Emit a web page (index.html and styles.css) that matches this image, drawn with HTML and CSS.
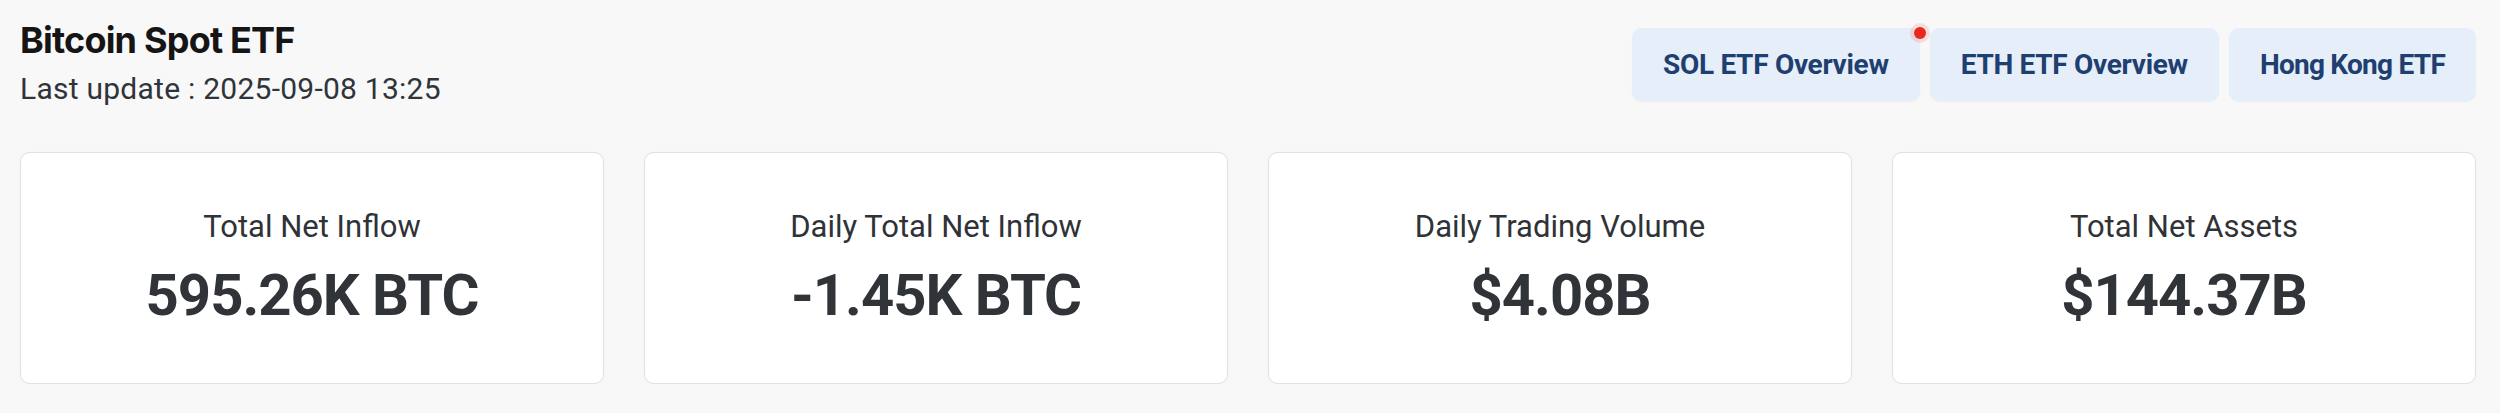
FILE: index.html
```html
<!DOCTYPE html>
<html lang="en">
<head>
<meta charset="utf-8">
<title>Bitcoin Spot ETF</title>
<link rel="stylesheet" href="styles.css">
</head>
<body>
<div class="page">
  <header class="header">
    <div class="heading">
      <h1 class="title">Bitcoin Spot ETF</h1>
      <div class="updated">Last update : 2025-09-08 13:25</div>
    </div>
    <nav class="links">
      <a class="link-btn has-dot" href="#">SOL ETF Overview<span class="dot"></span></a>
      <a class="link-btn" href="#">ETH ETF Overview</a>
      <a class="link-btn link-btn--tight" href="#">Hong Kong ETF</a>
    </nav>
  </header>
  <section class="cards">
    <div class="card">
      <div class="card-label">Total Net Inflow</div>
      <div class="card-value">595.26K BTC</div>
    </div>
    <div class="card">
      <div class="card-label">Daily Total Net Inflow</div>
      <div class="card-value">-1.45K BTC</div>
    </div>
    <div class="card">
      <div class="card-label">Daily Trading Volume</div>
      <div class="card-value">$4.08B</div>
    </div>
    <div class="card">
      <div class="card-label">Total Net Assets</div>
      <div class="card-value">$144.37B</div>
    </div>
  </section>
</div>
</body>
</html>
```

FILE: styles.css
```css
html, body {
  margin: 0;
  padding: 0;
  background: #f8f8f8;
}

body {
  font-family: Roboto, "Liberation Sans", sans-serif;
  color: #2f3237;
}

.page {
  padding: 18px 24px 0 20px;
}

.header {
  display: flex;
  justify-content: space-between;
  align-items: flex-start;
}

.title {
  margin: 0;
  font-family: Inter, Roboto, sans-serif;
  font-size: 36px;
  line-height: 44px;
  font-weight: 700;
  letter-spacing: -0.8px;
  color: #151515;
}

.updated {
  margin-top: 9px;
  font-size: 30px;
  line-height: 36px;
  letter-spacing: 0.25px;
  color: #30343a;
}

.links {
  display: flex;
  gap: 10px;
  margin-top: 10px;
}

.link-btn {
  position: relative;
  display: flex;
  align-items: center;
  justify-content: center;
  height: 73px;
  padding: 0 31px;
  box-sizing: border-box;
  border-radius: 10px;
  background: #e5eef9;
  box-shadow: 0 1px 2px rgba(30, 60, 110, 0.06);
  color: #1e3f6f;
  font-size: 28px;
  font-weight: 700;
  letter-spacing: -0.3px;
  text-decoration: none;
  white-space: nowrap;
}

.link-btn--tight {
  letter-spacing: -0.75px;
}

.dot {
  position: absolute;
  top: -1px;
  right: -6px;
  width: 12px;
  height: 12px;
  border-radius: 50%;
  background: #e8291f;
  box-shadow: 0 0 0 4px rgba(232, 41, 31, 0.12);
}

.cards {
  display: grid;
  grid-template-columns: repeat(4, 1fr);
  gap: 40px;
  margin-top: 45px;
}

.card {
  height: 232px;
  box-sizing: border-box;
  display: flex;
  flex-direction: column;
  align-items: center;
  justify-content: center;
  gap: 15px;
  background: #ffffff;
  border: 1px solid #e2e2e2;
  border-radius: 10px;
  box-shadow: 0 0 1px rgba(0, 0, 0, 0.08);
}

.card-label {
  font-size: 31px;
  line-height: 38px;
  color: #2f3237;
}

.card-value {
  font-size: 58px;
  line-height: 68px;
  font-weight: 700;
  letter-spacing: -1px;
  color: #303438;
}
```
